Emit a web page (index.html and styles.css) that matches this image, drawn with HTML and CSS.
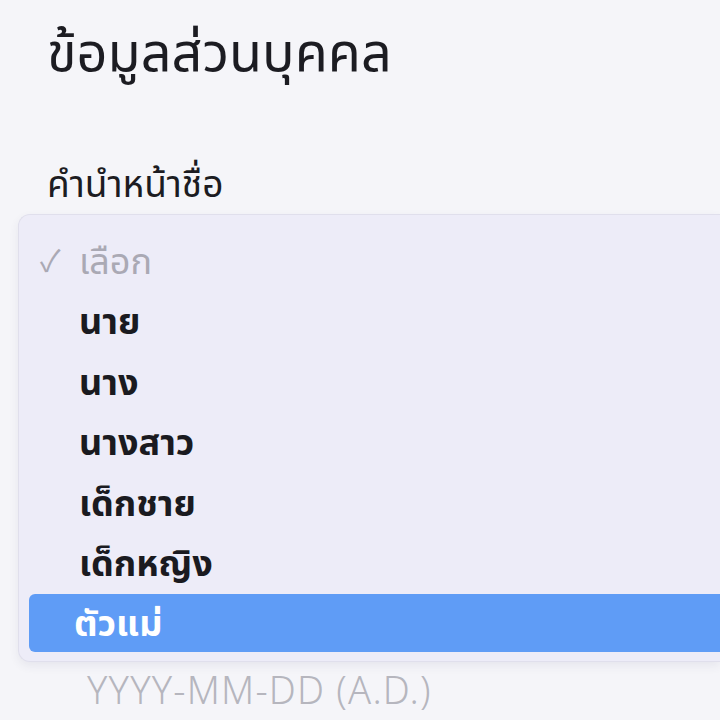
FILE: index.html
```html
<!DOCTYPE html>
<html lang="th">
<head>
<meta charset="utf-8">
<link rel="stylesheet" href="styles.css">
</head>
<body>
<main class="page">
  <h1 class="title">ข้อมูลส่วนบุคคล</h1>
  <div class="label">คำนำหน้าชื่อ</div>
  <div class="menu">
    <div class="opt placeholder"><span class="check">✓</span>เลือก</div>
    <div class="opt">นาย</div>
    <div class="opt">นาง</div>
    <div class="opt">นางสาว</div>
    <div class="opt">เด็กชาย</div>
    <div class="opt">เด็กหญิง</div>
    <div class="opt active">ตัวแม่</div>
  </div>
  <div class="date">YYYY-MM-DD (A.D.)</div>
</main>
</body>
</html>
```
FILE: styles.css
```css
html, body { margin: 0; padding: 0; }
body {
  width: 720px; height: 720px;
  background: #f5f5f9;
  font-family: "Noto Sans", "Noto Sans Thai", "Noto Sans CJK SC", sans-serif;
}
.page { display: flex; flex-direction: column; width: 720px; }
.title {
  margin: 18px 0 0 47px;
  font-size: 54px; font-weight: 400; color: #1c1c22;
  line-height: 64px;
}
.label {
  margin: 79px 0 0 47px;
  font-size: 37px; color: #1c1c22; line-height: 44px;
}
.menu {
  margin: 9px 0 0 18px;
  background: #edecf8;
  border: 1px solid #e0dfec;
  border-right: none;
  border-radius: 12px 0 0 12px;
  padding: 17px 0 9px 10px;
  box-shadow: 0 4px 10px rgba(60,60,100,0.08);
  display: flex; flex-direction: column; gap: 2.4px;
}
.opt {
  height: 58px; line-height: 58px;
  padding-left: 50px;
  font-size: 36px; font-weight: 700; color: #1a1a20;
  border-radius: 6px 0 0 6px;
  position: relative;
}
.placeholder { color: #aaa9b4; font-weight: 400; }
.check { position: absolute; left: 11px; font-size: 30px; color: #aaa9b4; }
.active { background: #5f9cf6; color: #fff; padding-left: 45px; }
.date {
  margin: 4px 0 0 87px;
  font-size: 38px; font-weight: 300; letter-spacing: 1.2px;
  color: #b6b6be; line-height: 46px;
}
```
